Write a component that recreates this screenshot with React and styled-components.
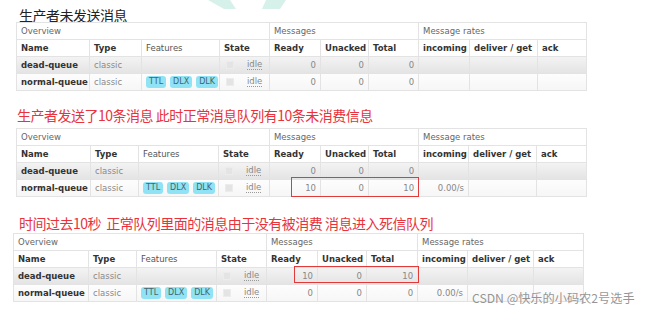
import React from "react";
import styled, { createGlobalStyle } from "styled-components";

const Global = createGlobalStyle`
  html, body { margin: 0; padding: 0; background: #fff; }
  body { width: 650px; height: 312px; overflow: hidden; }
`;

const Page = styled.div`
  position: relative;
  width: 650px;
  height: 312px;
  padding-top: 8px;
  box-sizing: border-box;
  font-family: "DejaVu Sans", Verdana, sans-serif;
`;

const Section = styled.section`
  margin-top: ${(p) => p.$top}px;
`;

const Title = styled.h2`
  margin: 0 0 ${(p) => p.$gap}px ${(p) => p.$left}px;
  font-family: "Noto Sans CJK SC", "Noto Sans", sans-serif;
  font-weight: 400;
  font-size: 14px;
  line-height: 14px;
  letter-spacing: -0.5px;
  color: ${(p) => (p.$red ? "#e8323c" : "#222")};
  white-space: pre;
`;

const TableWrap = styled.div`
  position: relative;
  width: 570px;
  margin-left: ${(p) => p.$left}px;
`;

const Table = styled.table`
  border-collapse: collapse;
  table-layout: fixed;
  width: 570px;
  font-size: 8.5px;
  font-family: "DejaVu Sans", Verdana, sans-serif;
  border: 1px solid #dedede;
`;

const Cell = styled.td`
  border: 1px solid #e3e3e3;
  height: 16px;
  padding: 0 4px;
  white-space: nowrap;
  overflow: hidden;
  box-sizing: border-box;
  vertical-align: middle;
  text-align: ${(p) => (p.$num ? "right" : "left")};
  color: ${(p) => p.$color || "#333"};
  font-weight: ${(p) => (p.$bold ? 700 : 400)};
`;

const Row = styled.tr`
  height: 17px;
  background: ${(p) =>
    p.$shade === "gray"
      ? "linear-gradient(#f3f3f3, #e3e3e3)"
      : p.$shade === "light"
      ? "linear-gradient(#fdfdfd, #f6f6f6)"
      : "#fff"};
`;

const Tags = styled.div`
  display: flex;
  gap: 4px;
`;

const Tag = styled.span`
  display: inline-block;
  padding: 0 3px;
  height: 12px;
  line-height: 12px;
  border-radius: 3px;
  background: #8fe3f4;
  color: #46646c;
  font-size: 8px;
`;

const StateBox = styled.div`
  display: flex;
  align-items: center;
  gap: 13px;
  padding-left: 2px;
`;

const Check = styled.span`
  width: 6px;
  height: 6px;
  background: #e4e4e4;
  border: 1px solid #ececec;
`;

const Idle = styled.span`
  color: #888;
  border-bottom: 1px dotted #999;
  line-height: 9px;
`;

const RedBox = styled.div`
  position: absolute;
  border: 1.5px solid #e03a3a;
  box-sizing: border-box;
  pointer-events: none;
`;

const Watermark = styled.div`
  position: absolute;
  left: 472px;
  top: 289px;
  font-family: "Noto Sans CJK SC", "Noto Sans", sans-serif;
  font-size: 12.2px;
  color: rgba(130, 130, 130, 0.85);
  white-space: nowrap;
`;

const Deco = styled.svg`
  position: absolute;
  left: 200px;
  top: 0;
`;

function QueueTable({ cols, rows }) {
  return (
    <Table>
      <colgroup>
        {cols.map((w, i) => (
          <col key={i} style={{ width: w }} />
        ))}
      </colgroup>
      <tbody>
        <Row>
          <Cell colSpan={4} $color="#666">Overview</Cell>
          <Cell colSpan={3} $color="#666">Messages</Cell>
          <Cell colSpan={3} $color="#666">Message rates</Cell>
        </Row>
        <Row>
          <Cell $bold>Name</Cell>
          <Cell $bold>Type</Cell>
          <Cell $color="#555">Features</Cell>
          <Cell $bold>State</Cell>
          <Cell $bold>Ready</Cell>
          <Cell $bold>Unacked</Cell>
          <Cell $bold>Total</Cell>
          <Cell $bold>incoming</Cell>
          <Cell $bold>deliver / get</Cell>
          <Cell $bold>ack</Cell>
        </Row>
        {rows.map((r, i) => (
          <Row key={r.name} $shade={i === 0 ? "gray" : "light"}>
            <Cell $bold>{r.name}</Cell>
            <Cell $color="#8a8a8a">classic</Cell>
            <Cell>
              {r.tags && (
                <Tags>
                  <Tag>TTL</Tag>
                  <Tag>DLX</Tag>
                  <Tag>DLK</Tag>
                </Tags>
              )}
            </Cell>
            <Cell>
              <StateBox>
                <Check />
                <Idle>idle</Idle>
              </StateBox>
            </Cell>
            <Cell $num $color="#888">{r.ready}</Cell>
            <Cell $num $color="#888">{r.unacked}</Cell>
            <Cell $num $color="#888">{r.total}</Cell>
            <Cell $num $color="#888">{r.rate || ""}</Cell>
            <Cell />
            <Cell />
          </Row>
        ))}
      </tbody>
    </Table>
  );
}

export default function App() {
  return (
    <Page>
      <Global />
      <Deco width="110" height="10" viewBox="0 0 110 10">
        <path d="M8 0 L30 0 L36 9 L24 9 Z" fill="#d6f1ea" />
        <path d="M66 0 L86 0 L80 9 L62 9 Z" fill="#d6f1ea" />
      </Deco>

      <Section $top={0}>
        <Title $left={19} $gap={0}>生产者未发送消息</Title>
        <TableWrap $left={16}>
          <QueueTable
            cols={[73, 52, 78, 50, 51, 48, 50, 51, 68, 49]}
            rows={[
              { name: "dead-queue", ready: 0, unacked: 0, total: 0 },
              { name: "normal-queue", tags: true, ready: 0, unacked: 0, total: 0 },
            ]}
          />
        </TableWrap>
      </Section>

      <Section $top={17}>
        <Title $left={17} $red $gap={6}>生产者发送了10条消息 此时正常消息队列有10条未消费信息</Title>
        <TableWrap $left={16}>
          <QueueTable
            cols={[74, 48, 80, 51, 51, 48, 50, 50, 68, 50]}
            rows={[
              { name: "dead-queue", ready: 0, unacked: 0, total: 0 },
              { name: "normal-queue", tags: true, ready: 10, unacked: 0, total: 10, rate: "0.00/s" },
            ]}
          />
          <RedBox style={{ left: 275, top: 49, width: 128, height: 20 }} />
        </TableWrap>
      </Section>

      <Section $top={19}>
        <Title $left={19} $red $gap={3}>时间过去10秒  正常队列里面的消息由于没有被消费 消息进入死信队列</Title>
        <TableWrap $left={13}>
          <QueueTable
            cols={[75, 48, 80, 50, 51, 49, 51, 50, 66, 50]}
            rows={[
              { name: "dead-queue", ready: 10, unacked: 0, total: 10 },
              { name: "normal-queue", tags: true, ready: 0, unacked: 0, total: 0, rate: "0.00/s" },
            ]}
          />
          <RedBox style={{ left: 281, top: 33, width: 125, height: 17 }} />
        </TableWrap>
      </Section>

      <Watermark>CSDN @快乐的小码农2号选手</Watermark>
    </Page>
  );
}
